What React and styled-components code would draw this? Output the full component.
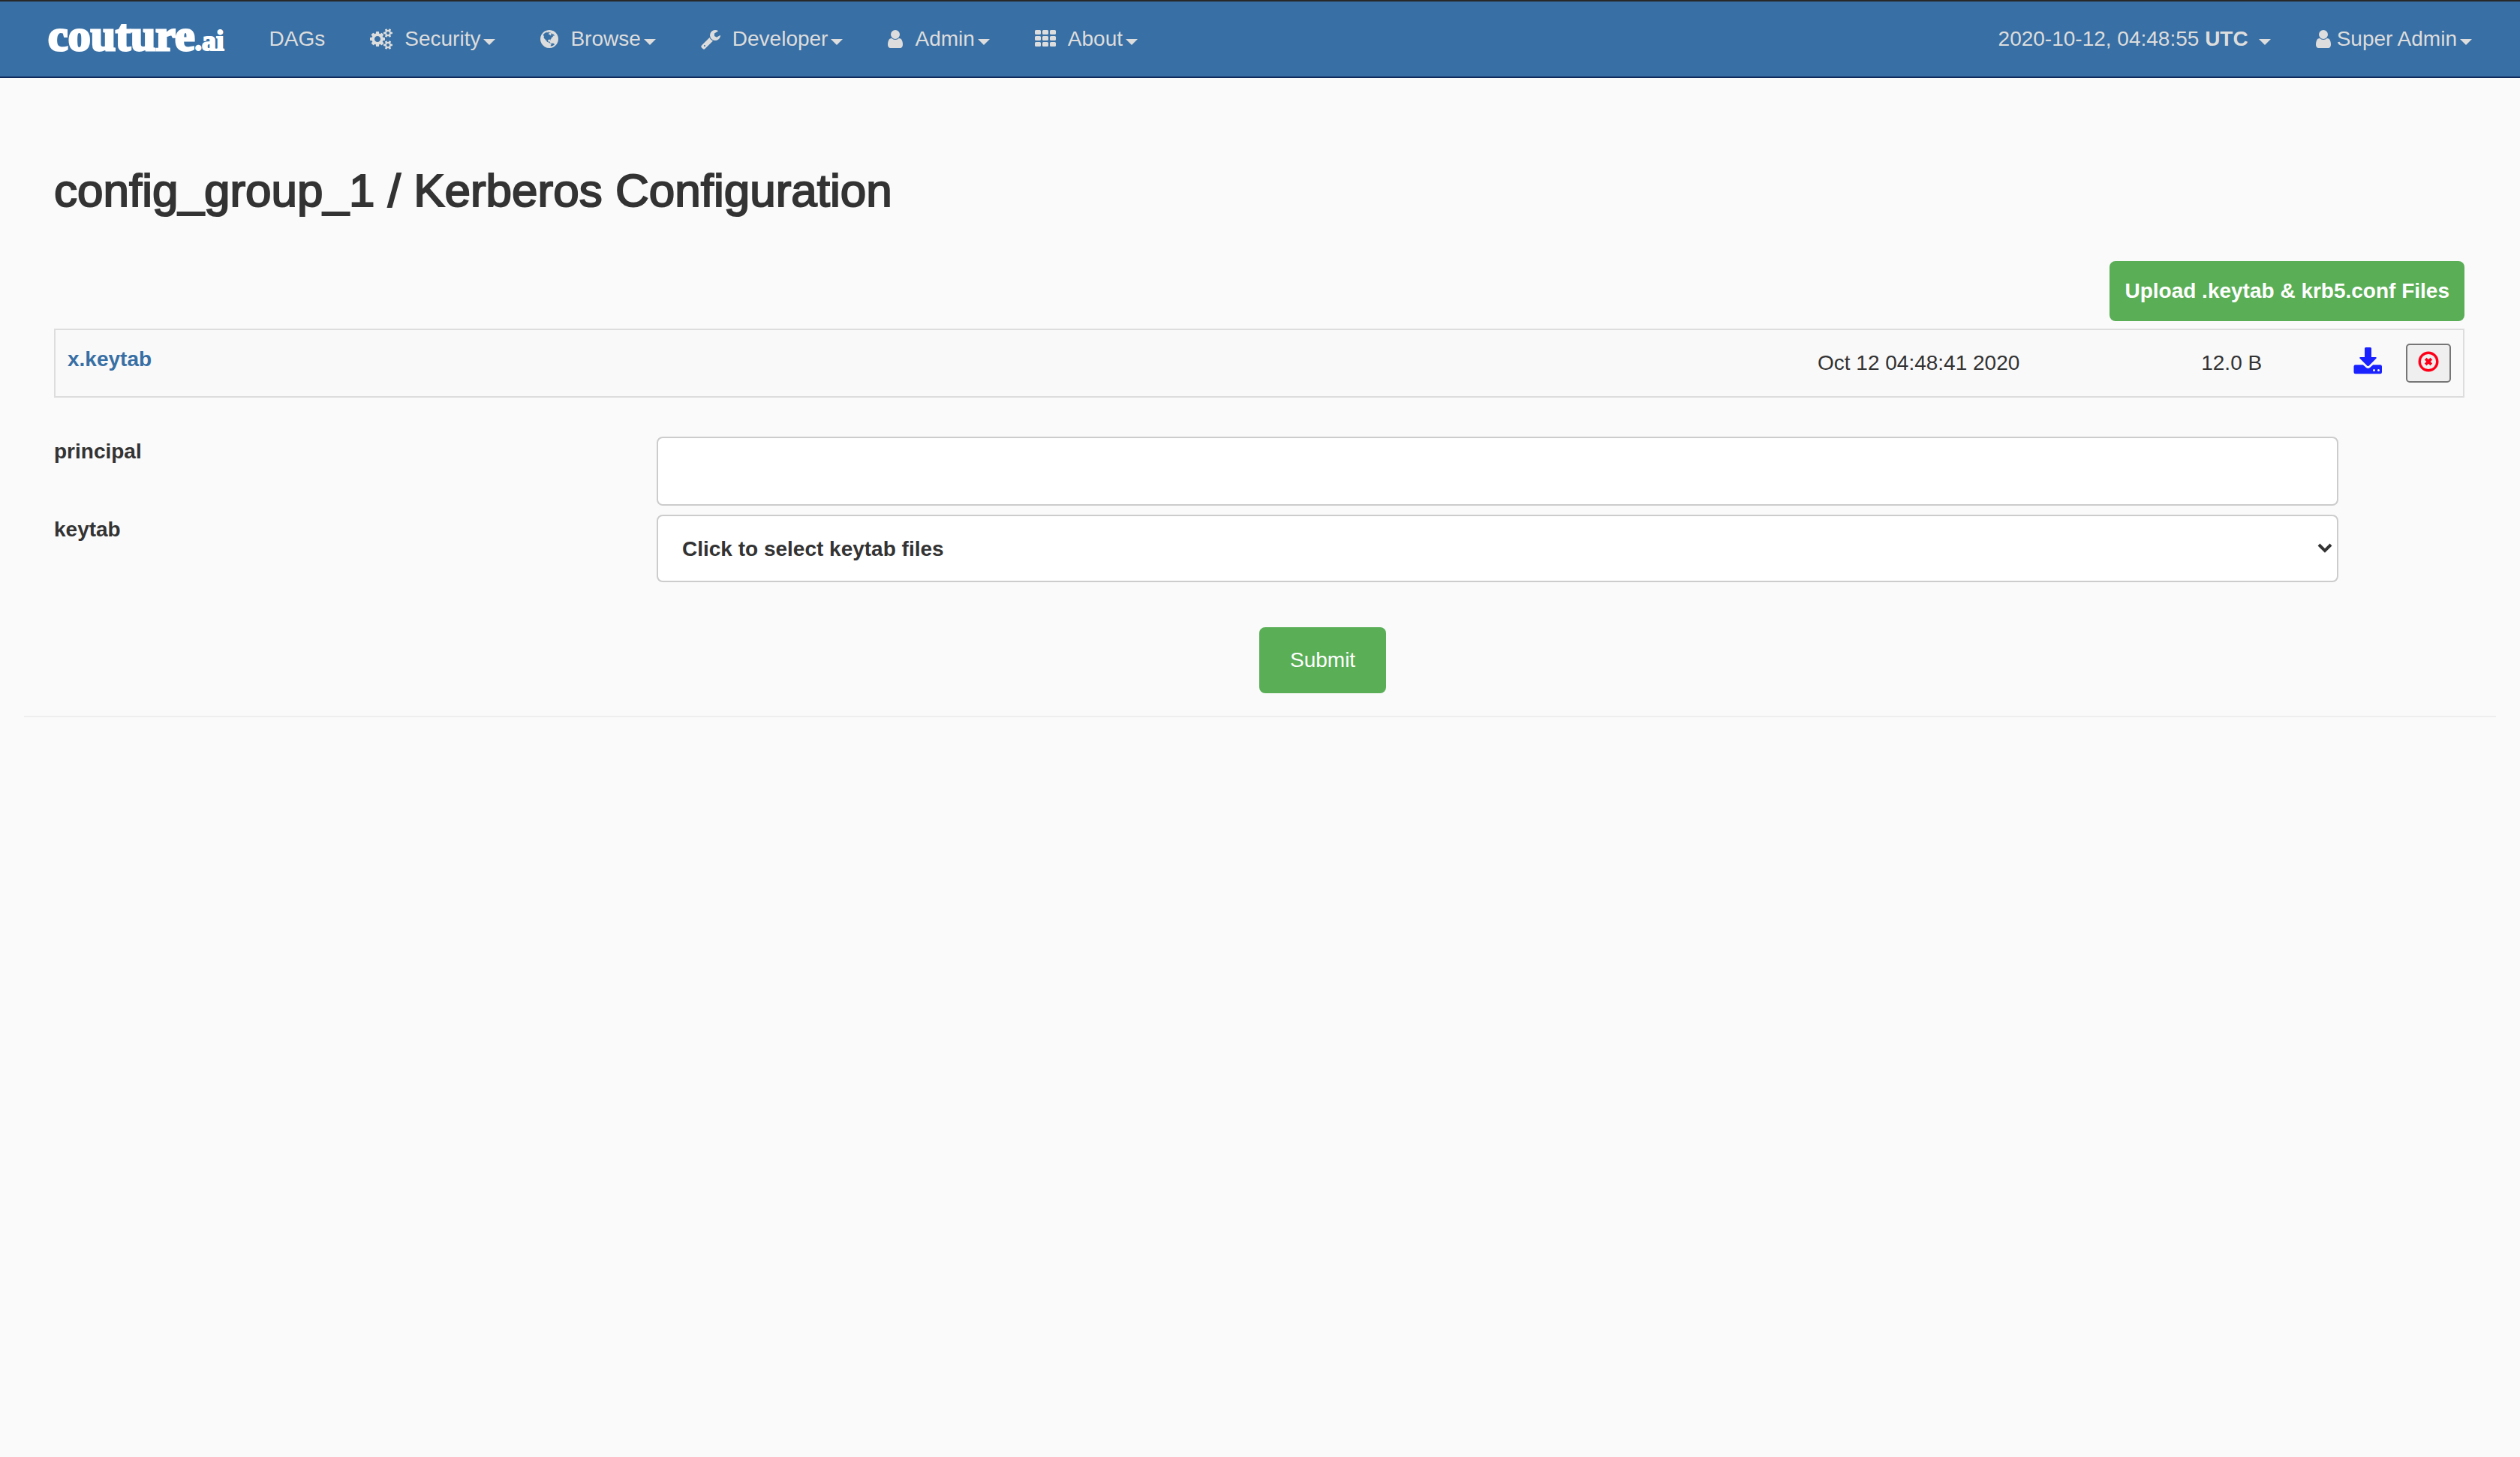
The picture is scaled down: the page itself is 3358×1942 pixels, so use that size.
import React from "react";
import styled, { createGlobalStyle } from "styled-components";

const GlobalStyle = createGlobalStyle`
  *, *::before, *::after { box-sizing: border-box; }
  body {
    margin: 0;
    background: #fafafa;
    color: #333;
    font: 28px/40px "Helvetica Neue", "Liberation Sans", Arial, sans-serif;
  }
  button, input, select { font: inherit; color: inherit; }
`;

const Navbar = styled.nav`
  display: flex;
  align-items: center;
  height: 104px;
  padding: 0 34px;
  background: #386fa4;
  border-top: 2px solid #282828;
  border-bottom: 2px solid #0f2a5c;
  color: #ddd;
`;

const Brand = styled.a`
  padding: 0 30px 4px;
  color: #fff;
  font: bold 60px/92px "Liberation Serif", serif;
  -webkit-text-stroke: 3px #fff;
  text-decoration: none;
`;

const BrandSuffix = styled.span`
  font-size: 38px;
  -webkit-text-stroke-width: 2px;
`;

const NavList = styled.ul`
  display: flex;
  margin: 0;
  margin-left: ${(p) => (p.$end ? "auto" : "0")};
  padding: 0;
  list-style: none;
`;

const NavLink = styled.a`
  display: flex;
  align-items: center;
  padding: 0 30px;
  color: inherit;
  line-height: 40px;
  text-decoration: none;
  white-space: pre;
`;

const NavIcon = styled.svg`
  height: 28px;
  margin-right: ${(p) => (p.$tight ? "8px" : "16px")};
  fill: currentColor;
`;

const Caret = styled.span`
  margin-top: 8px;
  margin-left: ${(p) => (p.$wide ? "14px" : "4px")};
  border-top: 8px solid currentColor;
  border-right: 8px solid transparent;
  border-left: 8px solid transparent;
`;

const Main = styled.main`
  padding: 0 32px;
`;

const Content = styled.div`
  padding: 112px 42px 30px 40px;
  border-bottom: 2px solid #eee;
`;

const Title = styled.h2`
  margin: 0 0 56px;
  font-size: 62px;
  font-weight: 500;
  line-height: 76px;
  -webkit-text-stroke: 2px currentColor;
`;

const Toolbar = styled.div`
  display: flex;
  justify-content: flex-end;
  margin-bottom: 10px;
`;

const GreenButton = styled.button`
  height: ${(p) => (p.$large ? "88px" : "80px")};
  padding: 0 ${(p) => (p.$large ? "41px" : "20px")};
  border: 0;
  border-radius: 8px;
  background: #59ae56;
  color: #fff;
  font-weight: ${(p) => (p.$large ? "400" : "700")};
`;

const FileTable = styled.table`
  width: 100%;
  border: 2px solid #ddd;
  border-spacing: 0;
  background: #f9f9f9;
  table-layout: fixed;
`;

const Cell = styled.td`
  width: ${(p) => p.$width || "auto"};
  height: 88px;
  padding: 0 16px;
  text-align: ${(p) => p.$align || "left"};
`;

const FileLink = styled.a`
  display: block;
  padding-bottom: 10px;
  color: #386fa4;
  font-weight: 700;
  text-decoration: none;
`;

const Actions = styled.div`
  display: flex;
  align-items: center;
  justify-content: flex-end;
  gap: 32px;
`;

const DownloadLink = styled.a`
  display: flex;
  padding-bottom: 6px;
  color: #1a22ff;
`;

const DeleteButton = styled.button`
  display: flex;
  align-items: center;
  justify-content: center;
  width: 60px;
  height: 52px;
  padding: 0 0 4px;
  border: 2px solid #767676;
  border-radius: 5px;
  background: #efefef;
  color: #ff0019;
`;

const Form = styled.form`
  display: grid;
  grid-template-columns: 25% 1fr 168px;
  row-gap: 12px;
  padding-top: 52px;
`;

const Label = styled.label`
  grid-column: 1;
  font-weight: 700;
`;

const fieldBox = `
  width: 100%;
  border: 2px solid #ccc;
  border-radius: 8px;
  background: #fff;
`;

const TextInput = styled.input`
  ${fieldBox}
  grid-column: 2;
  height: 92px;
  padding: 0 32px;
`;

const SelectWrap = styled.div`
  display: grid;
  grid-column: 2;
  align-items: center;
`;

const Select = styled.select`
  ${fieldBox}
  grid-area: 1 / 1;
  height: 90px;
  padding: 2px 32px 0;
  appearance: none;
  font-weight: 700;
`;

const Chevron = styled.svg`
  grid-area: 1 / 1;
  justify-self: end;
  width: 20px;
  height: 14px;
  margin-right: 8px;
  fill: none;
  stroke: #333;
  stroke-width: 4;
  pointer-events: none;
`;

const SubmitRow = styled.div`
  grid-column: 1 / -1;
  padding-top: 48px;
  margin-left: 50%;
`;

const icons = {
  cogs: {
    box: "0 0 1920 1792",
    d: "M896 896q0-106-75-181t-181-75-181 75-75 181 75 181 181 75 181-75 75-181zm768 512q0-52-38-90t-90-38-90 38-38 90q0 53 37.5 90.5t90.5 37.5 90.5-37.5 37.5-90.5zm0-1024q0-52-38-90t-90-38-90 38-38 90q0 53 37.5 90.5t90.5 37.5 90.5-37.5 37.5-90.5zm-384 421v185q0 10-7 19.5t-16 10.5l-155 24q-11 35-32 76 34 48 90 115 7 11 7 20 0 12-7 19-23 30-82.5 89.5t-78.5 59.5q-11 0-21-7l-115-90q-37 19-77 31-11 108-23 155-7 24-30 24h-186q-11 0-20-7.5t-10-17.5l-23-153q-34-10-75-31l-118 89q-7 7-20 7-11 0-21-8-144-133-144-160 0-9 7-19 10-14 41-53t47-61q-23-44-35-82l-152-24q-10-1-17-9.5t-7-19.5v-185q0-10 7-19.5t16-10.5l155-24q11-35 32-76-34-48-90-115-7-11-7-20 0-12 7-20 22-30 82-89t79-59q11 0 21 7l115 90q34-18 77-32 11-108 23-154 7-24 30-24h186q11 0 20 7.5t10 17.5l23 153q34 10 75 31l118-89q8-7 20-7 11 0 21 8 144 133 144 160 0 8-7 19-12 16-42 54t-45 60q23 48 34 82l152 23q10 2 17 10.5t7 19.5zm640 533v140q0 16-149 31-12 27-30 52 51 113 51 138 0 4-4 7-122 71-124 71-8 0-46-47t-52-68q-20 2-30 2t-30-2q-14 21-52 68t-46 47q-2 0-124-71-4-3-4-7 0-25 51-138-18-25-30-52-149-15-149-31v-140q0-16 149-31 13-29 30-52-51-113-51-138 0-4 4-7 4-2 35-20t59-34 30-16q8 0 46 46.5t52 67.5q20-2 30-2t30 2q51-71 92-112l6-2q4 0 124 70 4 3 4 7 0 25-51 138 17 23 30 52 149 15 149 31zm0-1024v140q0 16-149 31-12 27-30 52 51 113 51 138 0 4-4 7-122 71-124 71-8 0-46-47t-52-68q-20 2-30 2t-30-2q-14 21-52 68t-46 47q-2 0-124-71-4-3-4-7 0-25 51-138-18-25-30-52-149-15-149-31v-140q0-16 149-31 13-29 30-52-51-113-51-138 0-4 4-7 4-2 35-20t59-34 30-16q8 0 46 46.5t52 67.5q20-2 30-2t30 2q51-71 92-112l6-2q4 0 124 70 4 3 4 7 0 25-51 138 17 23 30 52 149 15 149 31z",
  },
  globe: {
    box: "128 0 1536 1792",
    d: "M896 128q209 0 385.5 103t279.5 279.5 103 385.5-103 385.5-279.5 279.5-385.5 103-385.5-103-279.5-279.5-103-385.5 103-385.5 279.5-279.5 385.5-103zm274 521q-2 1-9.5 9.5t-13.5 9.5q2 0 4.5-5t5-11 3.5-7q6-7 22-15 14-6 52-12 34-8 51 11-2-2 9.5-13t14.5-12q3-2 15-4.5t15-7.5l2-22q-12 1-17.5-7t-6.5-21q0 2-6 8 0-7-4.5-8t-11.5 1-9 1q-10-3-15-7.5t-8-16.5-4-15q-2-5-9.5-10.5t-9.5-10.5q-1-2-2.5-5.5t-3-6.5-4-5.5-5.5-2.5-7 5-7.5 10-4.5 5q-3-2-6-1.5t-4.5 1-4.5 3-5 3.5q-3 2-8.5 3t-8.5 2q15-5-1-11-10-4-16-3 9-4 7.5-12t-8.5-14h5q-1-4-8.5-8.5t-17.5-8.5-13-6q-8-5-34-9.5t-33-.5q-5 6-4.5 10.5t4 14 3.5 12.5q1 6-5.5 13t-6.5 12q0 7 14 15.5t10 21.5q-3 8-16 16t-16 12q-5 8-1.5 18.5t10.5 16.5q2 2 1.5 4t-3.5 4.5-5.5 4-6.5 3.5l-3 2q-11 5-20.5-6t-13.5-26q-7-25-16-30-23-8-29 1-5-13-41-26-25-9-58-4 6-1 0-15-7-15-19-12 3-6 4-17.5t1-13.5q3-13 12-23 1-1 7-8.5t9.5-13.5.5-6q35 4 50-11 5-5 11.5-17t10.5-17q9-6 14-5.5t14.5 5.5 14.5 5q14 1 15.5-11t-7.5-20q12 1 3-17-4-7-8-9-12-4-27 5-8 4 2 8-1-1-9.5 10.5t-16.5 17.5-16-5q-1-1-5.5-13.5t-9.5-13.5q-8 0-16 15 3-8-11-15t-24-8q19-12-8-27-7-4-20.5-5t-18.5 4q-5 7-5.5 11.5t5 8 10.5 5.5 11.5 4 8.500 3q14 10 8 14-2 1-8.5 3.5t-11.5 4.5-6 4q-3 4 0 14t-2 14q-5-5-9-17.5t-7-16.5q7 9-25 6l-10-1q-4 0-16 2t-20.5 1-13.5-8q-4-8 0-20 1-4 4-2-4-3-11-9.5t-10-8.5q-46 15-94 41 6 1 12-1 5-2 13-6.5t10-5.5q34-14 42-7l5-5q14 16 20 25-7-4-30-1-20 6-22 12 7 12 5 18-4-3-11.5-10t-14.5-11-15-5q-16 0-22 1-146 80-235 222 7 7 12 8 4 1 5 9t2.5 11 11.5-3q9 8 3 19 1-1 44 27 19 17 21 21 3 11-10 18-1-2-9-9t-9-4q-3 5 .5 18.5t10.5 12.5q-7 0-9.5 16t-2.5 35.5-1 23.5l2 1q-3 12 5.5 34.5t21.5 19.5q-13 3 20 43 6 8 8 9 3 2 12 7.5t15 10 10 10.5q4 5 10 22.5t14 23.5q-2 6 9.5 20t10.5 23q-1 0-2.5 1t-2.5 1q3 7 15.5 14t15.5 13q1 3 2 10t3 11 8 2q2-20-24-62-15-25-17-29-3-5-5.5-15.5t-4.5-14.5q2 0 6 1.5t8.5 3.5 7.5 4 2 3q-3 7 2 17.5t12 18.500 17 19 12 13q6 6 14 19.5t0 13.5q9 0 20 10.5t17 19.5q5 8 8 26t5 24q2 7 8.5 13.5t12.5 9.5l16 8 13 7q5 2 18.5 10.5t21.5 11.5q10 4 16 4t14.5-2.5 13.5-3.5q15-2 29 15t21 21q36 19 55 11-2 1 .5 7.5t8 15.5 9 14.5 5.5 8.5q5 6 18 15t18 15q6-4 7-9-3 8 7 20t18 10q14-3 14-32-31 15-49-18 0-1-2.5-5.5t-4-8.5-2.5-8.5 0-7.500 5-3q9 0 10-3.5t-2-12.5-4-13q-1-8-11-20t-12-15q-5 9-16 8t-16-9q0 1-1.5 5.5t-1.5 6.5q-13 0-15-1 1-3 2.5-17.5t3.5-22.5q1-4 5.5-12t7.5-14.5 4-12.5-4.5-9.5-17.5-2.5q-19 1-26 20-1 3-3 10.5t-5 11.5-9 7q-7 3-24 2t-24-5q-13-8-22.5-29t-9.5-37q0-10 2.5-26.5t3-25-5.5-24.5q3-2 9-9.5t10-10.5q2-1 4.5-1.5t4.5 0 4-1.5 3-6q-1-1-4-3-3-3-4-3 7 3 28.5-1.5t27.5 1.5q15 11 22-2 0-1-2.5-9.5t-.5-13.5q5 27 29 9 3 3 15.5 5t17.500 5q3 2 7 5.5t5.5 4.500 5-.5 8.5-6.5q10 14 12 24 11 40 19 44 7 3 11 2t4.500-9.500 0-14-1.500-12.500l-1-8v-18l-1-8q-15-3-18.5-12t1.5-18.5 15-18.5q1-1 8-3.5t15.5-6.5 12.5-8q21-19 15-35 7 0 11-9-1 0-5-3t-7.5-5-4.5-2q9-5 2-16 5-3 7.5-11t7.5-10q9 12 21 2 8-8 1-16 5-7 20.5-10.5t18.5-9.5q7 2 8-2t1-12 3-12q4-5 15-9t13-5l17-11q3-4 0-4 18 2 31-11 10-11-6-20 3-6-3-9.5t-15-5.5q3-1 11.5-.5t10.5-1.5q15-10-7-16-17-5-43 12zm-163 877q206-36 351-189-3-3-12.5-4.5t-12.5-3.5q-18-7-24-8 1-7-2.5-13t-8-9-12.5-8-11-7q-2-2-7-6t-7-5.5-7.5-4.5-8.5-2-10 1l-3 1q-3 1-5.5 2.5t-5.5 3-4 3 0 2.5q-21-17-36-22-5-1-11-5.5t-10.5-7-10-1.5-11.5 7q-5 5-6 15t-2 13q-7-5 0-17.5t2-18.5q-3-6-10.5-4.5t-12 4.5-11.5 8.5-9 6.5-8.5 5.5-8.5 7.5q-3 4-6 12t-5 11q-2-4-11.5-6.5t-9.5-5.5q2 10 4 35t5 38q7 31-12 48-27 25-29 40-4 22 12 26 0 7-8 20.5t-7 21.5q0 6 2 16z",
  },
  wrench: {
    box: "64 0 1664 1792",
    d: "M448 1472q0-26-19-45t-45-19-45 19-19 45 19 45 45 19 45-19 19-45zm644-420l-682 682q-37 37-90 37-52 0-91-37l-106-108q-38-36-38-90 0-53 38-91l681-681q39 98 114.5 173.5t173.5 114.5zm634-435q0 39-23 106-47 134-164.5 217.5t-258.5 83.5q-185 0-316.5-131.5t-131.5-316.5 131.5-316.5 316.5-131.5q58 0 121.5 16.5t107.5 46.5q16 11 16 28t-16 28l-293 169v224l193 107q5-3 79-48.5t135.5-81 70.5-35.5q15 0 23.5 10t8.5 25z",
  },
  user: {
    box: "256 0 1280 1792",
    d: "M1536 1399q0 109-62.5 187t-150.5 78h-854q-88 0-150.5-78t-62.5-187q0-85 8.5-160.5t31.5-152 58.5-131 94-89 134.5-34.5q131 128 313 128t313-128q76 0 134.5 34.5t94 89 58.5 131 31.5 152 8.5 160.5zm-256-887q0 159-112.5 271.5t-271.5 112.5-271.5-112.5-112.5-271.5 112.5-271.5 271.5-112.5 271.5 112.5 112.5 271.5z",
  },
  grid: {
    box: "0 0 28 28",
    d: [2, 10, 18]
      .map((y) =>
        [0, 10, 20]
          .map((x) => `M${x + 1.5} ${y}h5q1.5 0 1.5 1.5v3q0 1.5-1.5 1.5h-5q-1.5 0-1.5-1.5v-3q0-1.5 1.5-1.5z`)
          .join("")
      )
      .join(""),
  },
};

function Icon({ name, tight }) {
  return (
    <NavIcon viewBox={icons[name].box} $tight={tight} aria-hidden="true">
      <path d={icons[name].d} />
    </NavIcon>
  );
}

function DownloadIcon() {
  return (
    <svg width="38" height="36" viewBox="0 0 38 36" fill="currentColor" fillRule="evenodd" aria-hidden="true">
      <path d="M15 1.500q0-1.500 1.500-1.500h6q1.500 0 1.500 1.500v11.500h5.500q2.200 0 .9 1.700l-9.700 9.700q-1.200 1.100-2.400 0l-9.700-9.700q-1.300-1.700.9-1.700h5.500z" />
      <path d="M2.800 23.300h10l4.200 3.700q2.500 2 5 0l4.200-3.700h9.500q2.300 0 2.300 2.300v7.400q0 2.300-2.300 2.300h-32.900q-2.300 0-2.300-2.300v-7.400q0-2.300 2.300-2.300zM27.500 29a1.500 1.500 0 1 0 0 3a1.500 1.500 0 1 0 0-3zM33.500 29a1.500 1.500 0 1 0 0 3a1.500 1.500 0 1 0 0-3z" />
    </svg>
  );
}

function CircleXIcon() {
  return (
    <svg width="28" height="28" viewBox="0 0 28 28" fill="none" stroke="currentColor" aria-hidden="true">
      <circle cx="14" cy="14" r="11.8" strokeWidth="3.400" />
      <path d="M10.200 10.200l7.600 7.600M17.800 10.200l-7.600 7.600" strokeWidth="3.800" />
    </svg>
  );
}

const menu = [
  { label: "DAGs" },
  { label: "Security", icon: "cogs" },
  { label: "Browse", icon: "globe" },
  { label: "Developer", icon: "wrench" },
  { label: "Admin", icon: "user" },
  { label: "About", icon: "grid" },
];

export default function App() {
  return (
    <>
      <GlobalStyle />
      <Navbar>
        <Brand href="#">
          couture<BrandSuffix>.ai</BrandSuffix>
        </Brand>
        <NavList>
          {menu.map(({ label, icon }) => (
            <li key={label}>
              <NavLink href="#">
                {icon && <Icon name={icon} />}
                {label}
                {icon && <Caret />}
              </NavLink>
            </li>
          ))}
        </NavList>
        <NavList $end>
          <li>
            <NavLink href="#">
              2020-10-12, 04:48:55 <b>UTC</b>
              <Caret $wide />
            </NavLink>
          </li>
          <li>
            <NavLink href="#">
              <Icon name="user" tight />
              Super Admin
              <Caret />
            </NavLink>
          </li>
        </NavList>
      </Navbar>
      <Main>
        <Content>
          <Title>config_group_1 / Kerberos Configuration</Title>
          <Toolbar>
            <GreenButton type="button">Upload .keytab &amp; krb5.conf Files</GreenButton>
          </Toolbar>
          <FileTable>
            <tbody>
              <tr>
                <Cell>
                  <FileLink href="#">x.keytab</FileLink>
                </Cell>
                <Cell $width="18%" $align="center">Oct 12 04:48:41 2020</Cell>
                <Cell $width="8%" $align="center">12.0 B</Cell>
                <Cell $width="180px">
                  <Actions>
                    <DownloadLink href="#" aria-label="Download x.keytab">
                      <DownloadIcon />
                    </DownloadLink>
                    <DeleteButton type="button" aria-label="Delete x.keytab">
                      <CircleXIcon />
                    </DeleteButton>
                  </Actions>
                </Cell>
              </tr>
            </tbody>
          </FileTable>
          <Form onSubmit={(e) => e.preventDefault()}>
            <Label htmlFor="principal">principal</Label>
            <TextInput id="principal" type="text" />
            <Label htmlFor="keytab">keytab</Label>
            <SelectWrap>
              <Select id="keytab">
                <option>Click to select keytab files</option>
              </Select>
              <Chevron viewBox="0 0 20 14" aria-hidden="true">
                <path d="M2 2l8 8 8-8" />
              </Chevron>
            </SelectWrap>
            <SubmitRow>
              <GreenButton $large type="submit">Submit</GreenButton>
            </SubmitRow>
          </Form>
        </Content>
      </Main>
    </>
  );
}
